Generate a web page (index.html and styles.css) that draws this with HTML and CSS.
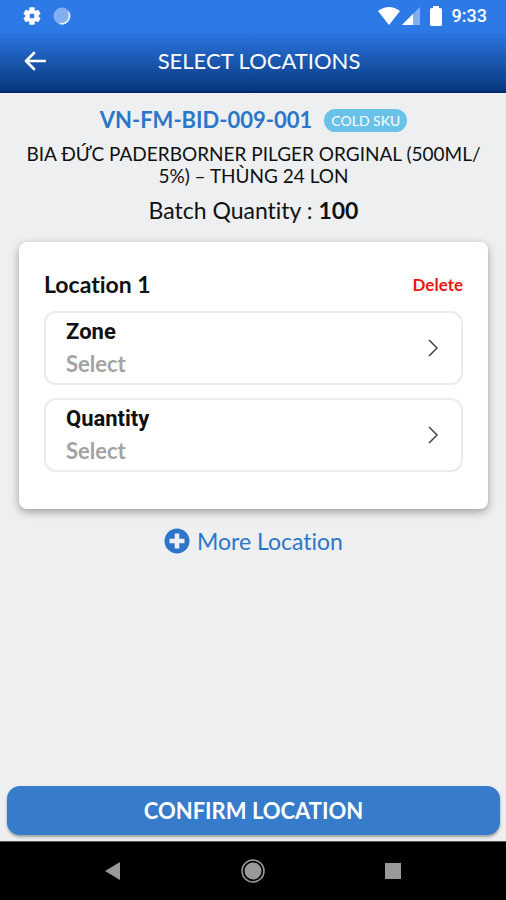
FILE: index.html
```html
<!DOCTYPE html>
<html lang="en">
<head>
<meta charset="utf-8">
<meta name="viewport" content="width=device-width, initial-scale=1">
<title>Select Locations</title>
<link rel="stylesheet" href="styles.css">
</head>
<body>
<header class="top">
  <div class="status">
    <svg width="20" height="20" viewBox="0 0 24 24" aria-hidden="true"><path fill="#fff" fill-rule="evenodd" stroke="#fff" stroke-linejoin="round" d="M19.4 13a7.6 7.6 0 0 0 0-2l2.4-1.8-2.4-4.2-2.8 1.2a8 8 0 0 0-1.700-1L14.500 2h-5l-.4 3.200a8 8 0 0 0-1.700 1L4.600 5 2.200 9.200 4.600 11a7.600 7.600 0 0 0 0 2l-2.400 1.800L4.600 19l2.800-1.200a8 8 0 0 0 1.700 1l.4 3.200h5l.4-3.200a8 8 0 0 0 1.700-1l2.800 1.200 2.400-4.200zM12 15.500a3.500 3.500 0 1 1 0-7 3.500 3.500 0 0 1 0 7z"/></svg>
    <svg width="18" height="18" viewBox="0 0 18 18" aria-hidden="true"><circle cx="9" cy="9" r="8.500" fill="#82aff2"/><path d="M15.500 5a8 8 0 0 1-9 11.500" fill="none" stroke="#e4efff" stroke-width="1.600"/></svg>
    <div class="signals">
      <svg width="22" height="18" viewBox="0 0 22 18" aria-hidden="true"><path fill="#fff" d="M0 4Q11-4 22 4L11 18z"/></svg>
      <svg width="18" height="18" viewBox="0 0 18 18" aria-hidden="true"><path fill="#82aff2" d="M18 0v18H0z"/><path fill="#fff" d="M11 7v11H0z"/></svg>
      <svg class="battery" width="12" height="20" viewBox="0 0 12 20" aria-hidden="true"><path fill="#fff" d="M3 0h6v2h1.500Q12 2 12 3.500v15q0 1.500-1.500 1.500h-9Q0 20 0 18.500v-15Q0 2 1.500 2H3z"/></svg>
      <span class="clock">9:33</span>
    </div>
  </div>
  <div class="bar">
    <button class="back" type="button" aria-label="Back"><svg width="22" height="20" viewBox="0 0 22 20" aria-hidden="true"><path d="M21 10H2M10 2l-8 8 8 8" fill="none" stroke="#fff" stroke-width="2.600" stroke-linecap="round" stroke-linejoin="round"/></svg></button>
    <h1>SELECT LOCATIONS</h1>
  </div>
</header>
<main>
  <section class="product">
    <div class="sku"><h2>VN-FM-BID-009-001</h2><span class="tag">COLD SKU</span></div>
    <p class="name">BIA ĐỨC PADERBORNER PILGER ORGINAL (500ML/<wbr>5%) – THÙNG 24 LON</p>
    <p class="batch">Batch Quantity : <b>100</b></p>
  </section>
  <section class="card">
    <div class="card-head"><h3>Location 1</h3><button class="delete" type="button">Delete</button></div>
    <button class="field" type="button">
      <span class="texts"><span class="label">Zone</span><span class="value">Select</span></span>
      <svg width="12" height="20" viewBox="0 0 12 20" aria-hidden="true"><path d="M2 2l8 8-8 8" fill="none" stroke="#444" stroke-width="1.500"/></svg>
    </button>
    <button class="field" type="button">
      <span class="texts"><span class="label">Quantity</span><span class="value">Select</span></span>
      <svg width="12" height="20" viewBox="0 0 12 20" aria-hidden="true"><path d="M2 2l8 8-8 8" fill="none" stroke="#444" stroke-width="1.500"/></svg>
    </button>
  </section>
  <button class="more" type="button">
    <svg width="26" height="26" viewBox="0 0 26 26" aria-hidden="true"><circle cx="13" cy="13" r="12.500" fill="#2c76c9"/><path d="M13 5.500v15M5.500 13h15" stroke="#edeff1" stroke-width="4.600"/></svg>
    <span>More Location</span>
  </button>
  <button class="confirm" type="button">CONFIRM LOCATION</button>
</main>
<nav class="system" aria-label="System">
  <button type="button" aria-label="Back"><svg width="24" height="24" viewBox="0 0 24 24" aria-hidden="true"><path fill="#999" d="M4 12l15-9v18z"/></svg></button>
  <button type="button" aria-label="Home"><svg width="24" height="24" viewBox="0 0 24 24" aria-hidden="true"><circle cx="12" cy="12" r="11" fill="none" stroke="#999" stroke-width="1.500"/><circle cx="12" cy="12" r="8.500" fill="#999"/></svg></button>
  <button type="button" aria-label="Recent apps"><svg width="24" height="24" viewBox="0 0 24 24" aria-hidden="true"><path fill="#999" d="M4 4h16v16H4z"/></svg></button>
</nav>
</body>
</html>
```
FILE: styles.css
```css
* { box-sizing: border-box; }
body {
  margin: 0;
  min-height: 100vh;
  display: flex;
  flex-direction: column;
  background: #edeff1;
  color: #111;
  font-family: Lato, "Noto Sans", sans-serif;
  font-variant-ligatures: none;
}
h1, h2, h3, p { margin: 0; }
button {
  margin: 0;
  padding: 0;
  border: 0;
  background: none;
  font: inherit;
  font-variant-ligatures: none;
  color: inherit;
  cursor: pointer;
}
svg { display: block; flex: none; }

.top {
  background: linear-gradient(#2d79e6 0, #2d79e6 30px, #08397f 90px);
  border-bottom: 2px solid #052a72;
  color: #fff;
}
.status {
  display: flex;
  align-items: center;
  gap: 11px;
  height: 31px;
  padding: 0 19px 0 22px;
}
.signals {
  display: flex;
  align-items: center;
  gap: 2px;
  margin-left: auto;
}
.battery { margin: 0 8px; }
.clock { font: 500 18px/24px Roboto, sans-serif; }
.bar {
  display: grid;
  grid-template-columns: 24px 1fr 24px;
  align-items: center;
  height: 60px;
  padding: 0 24px;
}
h1 {
  font-size: 22px;
  font-weight: 400;
  line-height: 28px;
  text-align: center;
  padding-left: 12px;
}

main {
  flex: 1;
  display: flex;
  flex-direction: column;
  padding: 13px 6px 6px 7px;
}
.product { text-align: center; padding: 0 12px; }
.sku {
  display: flex;
  justify-content: center;
  align-items: center;
  gap: 12px;
  height: 28px;
}
h2 {
  font-size: 22px;
  line-height: 28px;
  color: #2c76c9;
}
.tag {
  padding: 0 7px;
  border-radius: 12px;
  background: #6ac2e8;
  color: #fff;
  font-size: 14px;
  line-height: 23px;
}
.name {
  margin-top: 9px;
  font-size: 19px;
  line-height: 22px;
}
.batch {
  margin-top: 9px;
  font-size: 23px;
  line-height: 28px;
}
.card {
  display: flex;
  flex-direction: column;
  gap: 13px;
  margin: 18px 12px 0;
  padding: 28px 25px 37px;
  border-radius: 8px;
  background: #fff;
  box-shadow: 0 3px 8px rgba(0, 0, 0, .35);
}
.card-head {
  display: flex;
  justify-content: space-between;
  align-items: center;
}
h3 { font-size: 23px; line-height: 28px; }
.delete { color: #e8170f; font-size: 17px; font-weight: 700; }
.field {
  display: flex;
  justify-content: space-between;
  align-items: center;
  padding: 3px 22px 3px 20px;
  border: 2px solid #e9ecec;
  border-radius: 12px;
  text-align: left;
}
.texts { display: flex; flex-direction: column; }
.label { font: 700 22px/32px Roboto, sans-serif; }
.value { font-size: 22px; font-weight: 700; line-height: 32px; color: #a3a3a3; }
.more {
  display: flex;
  align-items: center;
  align-self: center;
  gap: 7px;
  margin-top: 18px;
  color: #2c76c9;
  font-size: 23px;
  line-height: 28px;
}
.confirm {
  height: 49px;
  margin-top: auto;
  border-radius: 13px;
  background: #377bcb;
  box-shadow: 0 2px 3px rgba(0, 0, 0, .35);
  color: #fff;
  font-size: 22px;
  font-weight: 700;
}
.system {
  display: flex;
  justify-content: center;
  gap: 116px;
  padding: 17px 0;
  background: #000;
  border-top: 1px solid #555;
}
```
